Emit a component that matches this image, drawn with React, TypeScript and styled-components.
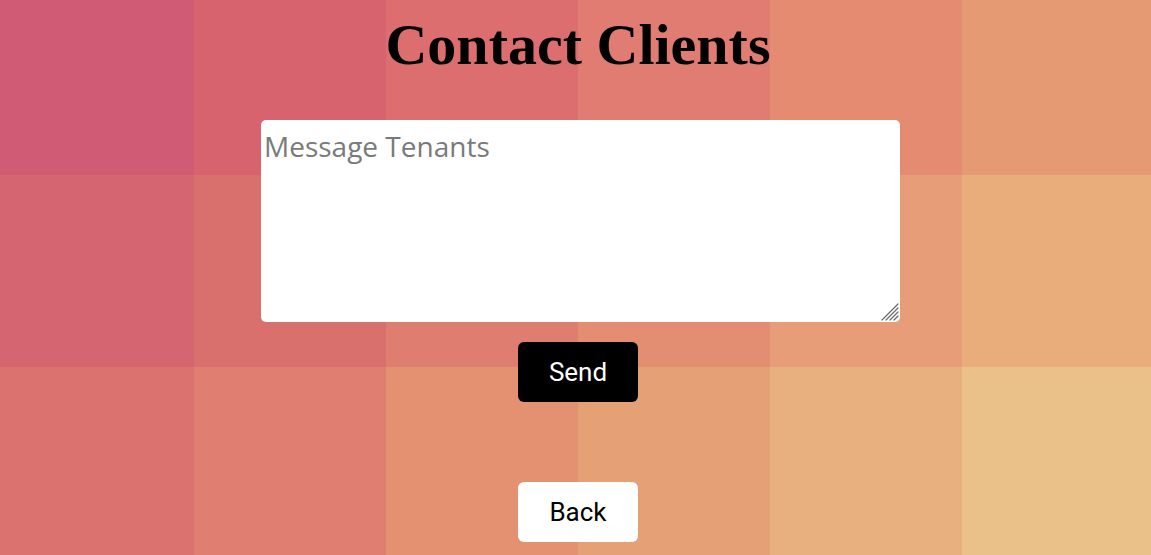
import React from "react";
import styled, { createGlobalStyle } from "styled-components";

const GlobalStyle = createGlobalStyle`
  html, body { margin: 0; padding: 0; height: 100%; }
  body { overflow: hidden; }
`;

const tileColors: string[][] = [
  ["#cf5b74", "#d7636f", "#dc6e6f", "#e07c71", "#e48b71", "#e69a74"],
  ["#d46571", "#da706e", "#df7e70", "#e38e72", "#e79d77", "#e8ad7b"],
  ["#db7270", "#e07f71", "#e49172", "#e5a076", "#e8b07e", "#ebc18a"],
];

const Page = styled.div`
  display: grid;
  grid-template: 100vh / 100vw;
  overflow: hidden;
`;

const Tiles = styled.div`
  grid-area: 1 / 1;
  display: grid;
  grid-template-columns: 194px repeat(4, 192px) 1fr;
  grid-template-rows: 175px 192px 1fr;
`;

const Tile = styled.div<{ $c: string }>`
  background: ${(p) => p.$c};
`;

const Content = styled.main`
  grid-area: 1 / 1;
  display: flex;
  flex-direction: column;
  align-items: center;
  padding-left: 5px;
`;

const Title = styled.h1`
  margin: 12px 0 42px;
  font-family: "Liberation Serif", "DejaVu Serif", serif;
  font-weight: 700;
  font-size: 58px;
  line-height: 66px;
  color: #000;
`;

const Field = styled.div`
  position: relative;
  width: 639px;
  height: 202px;
  margin: 0 0 20px 5px;
`;

const Message = styled.textarea`
  box-sizing: border-box;
  display: block;
  width: 100%;
  height: 100%;
  margin: 0;
  padding: 7px 3px 4px;
  border: none;
  border-radius: 5px;
  background: #fff;
  font-family: "Open Sans", sans-serif;
  font-size: 28px;
  color: #222;
  outline: none;
  resize: none;
  &::placeholder {
    color: #7a7a7a;
  }
`;

const Grip = styled.svg`
  position: absolute;
  right: 1px;
  bottom: 1px;
  width: 18px;
  height: 18px;
  pointer-events: none;
`;

const Button = styled.button<{ $dark?: boolean }>`
  width: 120px;
  height: 60px;
  border: none;
  border-radius: 6px;
  background: ${(p) => (p.$dark ? "#000" : "#fff")};
  color: ${(p) => (p.$dark ? "#fff" : "#000")};
  font-family: Roboto, "DejaVu Sans", sans-serif;
  font-size: 26px;
  cursor: pointer;
  margin-bottom: ${(p) => (p.$dark ? "80px" : "0")};
`;

export default function App() {
  return (
    <>
      <GlobalStyle />
      <Page>
        <Tiles>
          {tileColors.flatMap((row, r) =>
            row.map((c, i) => <Tile key={`${r}-${i}`} $c={c} />)
          )}
        </Tiles>
        <Content>
          <Title>Contact Clients</Title>
          <Field>
            <Message placeholder="Message Tenants" />
            <Grip viewBox="0 0 18 18">
              <g stroke="#6a6a6a" strokeWidth="1.2" strokeLinecap="round">
                <line x1="1" y1="17" x2="17" y2="1" />
                <line x1="5" y1="17" x2="17" y2="5" />
                <line x1="9" y1="17" x2="17" y2="9" />
                <line x1="13" y1="17" x2="17" y2="13" />
              </g>
            </Grip>
          </Field>
          <Button $dark>Send</Button>
          <Button>Back</Button>
        </Content>
      </Page>
    </>
  );
}
